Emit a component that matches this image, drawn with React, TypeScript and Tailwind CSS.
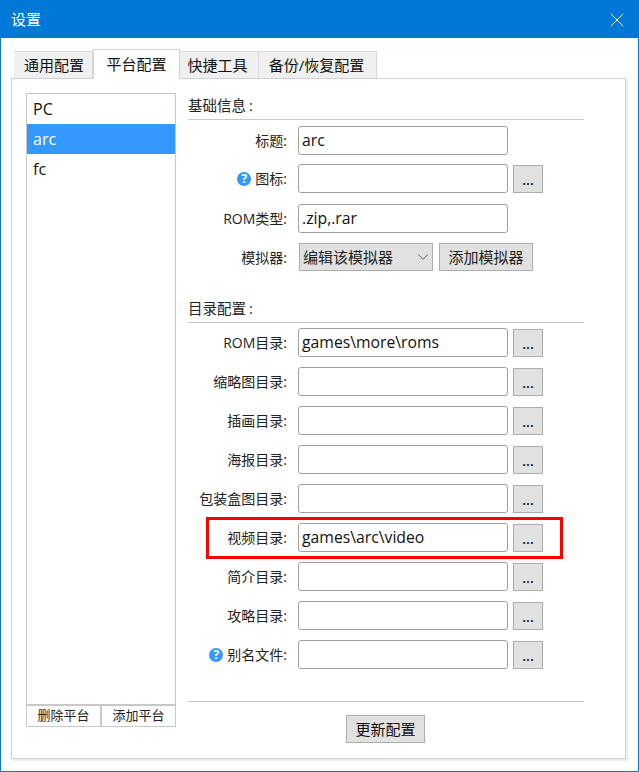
import { ChevronDown, X } from 'lucide-react';

const font = { fontFamily: '"Open Sans", "Noto Sans CJK SC", sans-serif' };

function HelpIcon() {
  return (
    <span className="mr-[4px] flex h-[14px] w-[14px] items-center justify-center rounded-full bg-[#3399ff] text-[12px] font-bold leading-none text-white">
      ?
    </span>
  );
}

function Row({ label, value, help, browse = true, className = '' }: { label: string; value?: string; help?: boolean; browse?: boolean; className?: string }) {
  return (
    <div className={`flex h-[30px] items-start ${className}`}>
      <div className="flex h-[29px] w-[99px] items-center justify-end text-[14px] text-[#222]">
        {help && <HelpIcon />}
        <span>{label}:</span>
      </div>
      <div className="ml-[11px] flex h-[29px] w-[210px] items-center rounded-[3px] border border-[#a0a0a0] bg-white pl-[3px] text-[15.75px] text-[#111]">
        {value}
      </div>
      {browse && (
        <div className="ml-[5px] mt-[1px] flex h-[28px] w-[30px] items-center justify-center border border-[#adadad] bg-[#e1e1e1] text-[14px] font-semibold text-[#111]">
          ...
        </div>
      )}
    </div>
  );
}

function SectionTitle({ text }: { text: string }) {
  return (
    <div className="flex h-[27px] w-[396px] items-center border-b border-[#c8c8c8] text-[14.5px] text-[#222]">
      {text}
      <span className="ml-[3px]">:</span>
    </div>
  );
}

export default function App() {
  const tabs = ['通用配置', '平台配置', '快捷工具', '备份/恢复配置'];
  // widths plus the small nudges the text has in each tab
  const tabStyles = ['w-[79px] pl-[2px]', 'w-[87px]', 'w-[79px] pr-[3px]', 'w-[118px] pr-[2px]'];

  return (
    <div className="flex h-[772px] w-[639px] flex-col border border-[#0078d7] bg-white" style={font}>
      {/* title bar */}
      <div className="flex h-[37px] shrink-0 items-center justify-between bg-[#0078d7] pl-[10px] pr-[9px] text-[15px] text-white">
        <span>设置</span>
        <X size={24} strokeWidth={1} />
      </div>

      <div className="flex flex-1 flex-col pl-[10px] pr-[11px] pt-[12px]">
        {/* tabs */}
        <div className="flex h-[28px] items-end pl-[3px]">
          {tabs.map((t, i) =>
            i === 1 ? (
              <div key={t} className={`relative z-10 flex h-[30px] ${tabStyles[i]} -mb-px items-center justify-center border border-b-0 border-[#d0d0d0] bg-white text-[15px] text-[#111]`}>
                {t}
              </div>
            ) : (
              <div key={t} className={`flex h-[27px] ${tabStyles[i]} items-center justify-center border-t border-r border-[#d9d9d9] bg-[#f0f0f0] text-[15px] text-[#111]`}>
                {t}
              </div>
            ),
          )}
        </div>

        {/* pane */}
        <div className="flex h-[681px] w-[615px] border border-[#d0d0d0] bg-white pl-[14px] pt-[14px] shadow-[2px_2px_0_#eeeeee]">
          {/* platform list */}
          <div className="flex h-[634px] w-[150px] flex-col border border-[#c8c8c8]">
            <div className="flex-1 text-[16px] text-[#111]">
              <div className="flex h-[30px] items-center pl-[6px]">PC</div>
              <div className="flex h-[30px] items-center bg-[#3399ff] pl-[6px] text-white">arc</div>
              <div className="flex h-[30px] items-center pl-[6px]">fc</div>
            </div>
            <div className="flex h-[22px] border-t-2 border-[#c8c8c8] text-[13px] text-[#222]">
              <div className="flex flex-1 items-center justify-center">删除平台</div>
              <div className="flex flex-1 items-center justify-center border-l-2 border-[#c8c8c8]">添加平台</div>
            </div>
          </div>

          {/* form */}
          <div className="relative ml-[12px] flex w-[396px] flex-col">
            <SectionTitle text="基础信息" />
            <div className="mt-[6px] flex flex-col">
              <Row label="标题" value="arc" browse={false} />
              <Row label="图标" help className="mt-[8px]" />
              <Row label="ROM类型" value=".zip,.rar" browse={false} className="mt-[10px]" />
              <div className="mt-[9px] flex h-[28px]">
                <div className="flex w-[99px] items-center justify-end text-[14px] text-[#222]">模拟器:</div>
                <div className="ml-[12px] flex h-[28px] w-[134px] items-center justify-between border border-[#adadad] bg-[#e1e1e1] pl-[3px] text-[15px] text-[#222]">
                  <span>编辑该模拟器</span>
                  <ChevronDown size={18} strokeWidth={1.2} className="text-[#555]" />
                </div>
                <div className="ml-[6px] flex h-[28px] w-[94px] items-center justify-center border border-[#adadad] bg-[#e1e1e1] text-[15px] text-[#222]">
                  添加模拟器
                </div>
              </div>
            </div>

            <div className="mt-[25px]">
              <SectionTitle text="目录配置" />
            </div>
            <div className="mt-[5px] flex flex-col gap-[9px]">
              <Row label="ROM目录" value="games\more\roms" />
              <Row label="缩略图目录" />
              <Row label="插画目录" />
              <Row label="海报目录" />
              <Row label="包装盒图目录" />
              <Row label="视频目录" value="games\arc\video" />
              <Row label="简介目录" />
              <Row label="攻略目录" />
              <Row label="别名文件" help />
            </div>

            <div className="mt-[31px] w-[396px] border-t border-[#c8c8c8]" />
            <div className="mt-[13px] flex justify-center pr-[1px]">
              <div className="flex h-[28px] w-[79px] items-center justify-center border border-[#adadad] bg-[#e1e1e1] text-[15px] text-[#111]">
                更新配置
              </div>
            </div>

            {/* red highlight over the video row */}
            <div className="absolute left-[18px] top-[424px] h-[42px] w-[357px] border-[3px] border-[#ff0000]" />
          </div>
        </div>
      </div>
    </div>
  );
}
